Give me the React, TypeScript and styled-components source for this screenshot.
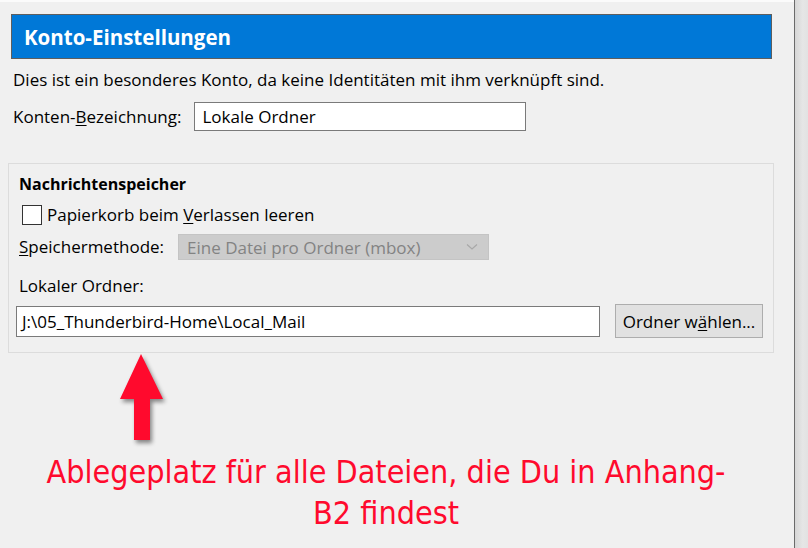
import React from 'react';
import styled, { createGlobalStyle } from 'styled-components';

const GlobalStyle = createGlobalStyle`
  html, body {
    margin: 0;
    padding: 0;
    background: #f0f0f0;
  }
  body {
    font-family: 'Open Sans', 'Noto Sans', sans-serif;
    font-size: 17px;
    color: #000;
  }
`;

const Window = styled.div`
  display: flex;
  width: 808px;
  height: 548px;
  overflow: hidden;
`;

const Main = styled.div`
  width: 794px;
  background: #f0f0f0;
  border-top: 2px solid #fbfbfb;
  padding: 12px 22px 0 11px;
  box-sizing: border-box;
  display: flex;
  flex-direction: column;
`;

const Edge = styled.div`
  width: 1px;
  background: #6a6a6a;
`;

const Side = styled.div`
  flex: 1;
  background: linear-gradient(to right, #d6d6d6, #e6e6e6 60%, #e2e2e2);
`;

const Header = styled.div`
  height: 45px;
  box-sizing: border-box;
  background: #0078d7;
  border: 1px solid #5e5e5e;
  padding: 1px 0 0 12px;
  display: flex;
  align-items: center;
  color: #fff;
  font-size: 20.5px;
  font-weight: 700;
`;

const Note = styled.div`
  margin: 10px 0 0 2px;
  line-height: 22px;
`;

const Row = styled.div<{ $gap?: number }>`
  display: flex;
  align-items: center;
  gap: ${(p) => p.$gap ?? 0}px;
`;

const NameRow = styled(Row)`
  margin: 11px 0 0 2px;
`;

const TextInput = styled.div<{ $w: number; $h: number }>`
  width: ${(p) => p.$w}px;
  height: ${(p) => p.$h}px;
  box-sizing: border-box;
  background: #fff;
  border: 1px solid #7a7a7a;
  padding-left: 7px;
  display: flex;
  align-items: center;
  white-space: nowrap;
`;

const Group = styled.fieldset`
  margin: 32px 0 0 -3px;
  width: 765px;
  height: 190px;
  box-sizing: border-box;
  border: 1px solid #dcdcdc;
  padding: 9px 10px 0 10px;
  display: flex;
  flex-direction: column;
`;

const GroupTitle = styled.div`
  font-weight: 700;
  font-size: 16px;
  line-height: 22px;
`;

const CheckRow = styled(Row)`
  margin: 9px 0 0 3px;
`;

const Box = styled.span`
  width: 20px;
  height: 20px;
  box-sizing: border-box;
  border: 1px solid #333;
  background: #fff;
  margin-right: 5px;
`;

const MethodRow = styled(Row)`
  margin-top: 8px;
`;

const Select = styled.div`
  width: 311px;
  height: 26px;
  box-sizing: border-box;
  background: #cccccc;
  border: 1px solid #c4c4c4;
  color: #838383;
  padding: 0 10px 0 8px;
  display: flex;
  align-items: center;
  justify-content: space-between;
  white-space: nowrap;
`;

const Label = styled.div`
  line-height: 22px;
  white-space: nowrap;
`;

const FolderLabel = styled(Label)`
  margin-top: 15px;
`;

const PathRow = styled(Row)`
  margin: 7px 0 0 -3px;
`;

const Button = styled.div`
  width: 148px;
  height: 34px;
  box-sizing: border-box;
  background: #e1e1e1;
  border: 1px solid #adadad;
  display: flex;
  align-items: center;
  justify-content: center;
  white-space: nowrap;
`;

const Annotation = styled.div`
  display: flex;
  flex-direction: column;
`;

const Arrow = styled.svg`
  display: block;
  margin: -1px 0 0 104px;
  filter: drop-shadow(2px 3px 2px rgba(0, 0, 0, 0.45));
`;

const Callout = styled.div`
  margin: 4px 0 0 0;
  width: 750px;
  text-align: center;
  color: #ff0a2d;
  font-family: 'DejaVu Sans Condensed', 'DejaVu Sans', sans-serif;
  font-stretch: condensed;
  font-size: 32px;
  line-height: 41px;
`;

const U = styled.span`
  text-decoration: underline;
  text-underline-offset: 2px;
`;

export default function App() {
  return (
    <>
      <GlobalStyle />
      <Window>
        <Main>
          <Header>Konto-Einstellungen</Header>
          <Note>Dies ist ein besonderes Konto, da keine Identitäten mit ihm verknüpft sind.</Note>
          <NameRow $gap={13}>
            <Label>
              Konten-<U>B</U>ezeichnung:
            </Label>
            <TextInput $w={332} $h={29}>Lokale Ordner</TextInput>
          </NameRow>

          <Group>
            <GroupTitle>Nachrichtenspeicher</GroupTitle>
            <CheckRow>
              <Box />
              <Label>
                Papierkorb beim <U>V</U>erlassen leeren
              </Label>
            </CheckRow>
            <MethodRow $gap={14}>
              <Label>
                <U>S</U>peichermethode:
              </Label>
              <Select>
                <span>Eine Datei pro Ordner (mbox)</span>
                <svg width="12" height="8" viewBox="0 0 12 8">
                  <path d="M1 1.5 L6 6 L11 1.5" fill="none" stroke="#a8a8a8" strokeWidth="1.2" />
                </svg>
              </Select>
            </MethodRow>
            <FolderLabel>Lokaler Ordner:</FolderLabel>
            <PathRow $gap={15}>
              <TextInput $w={584} $h={31} style={{ paddingLeft: 5 }}>
                J:\05_Thunderbird-Home\Local_Mail
              </TextInput>
              <Button>
                Ordner w<U>ä</U>hlen...
              </Button>
            </PathRow>
          </Group>

          <Annotation>
            <Arrow width="56" height="96" viewBox="0 0 56 96">
              <path d="M26 2 L48 47 L35 47 L35 88 L19 88 L19 47 L5 47 Z" fill="#ff0a2d" />
            </Arrow>
            <Callout>
              Ablegeplatz für alle Dateien, die Du in Anhang-
              <br />
              B2 findest
            </Callout>
          </Annotation>
        </Main>
        <Edge />
        <Side />
      </Window>
    </>
  );
}
